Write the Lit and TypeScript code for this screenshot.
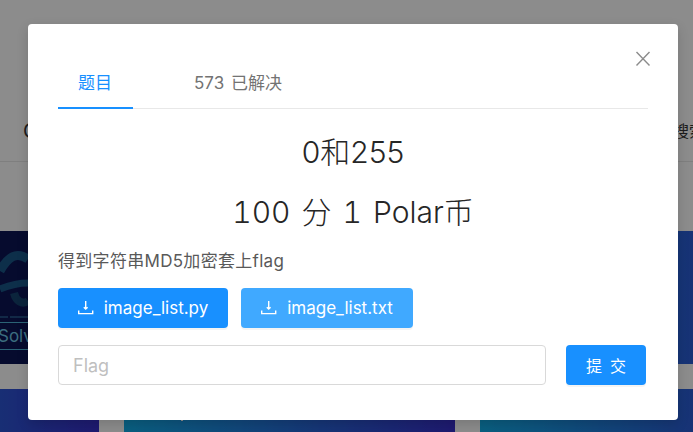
import { LitElement, html, css } from "lit";
import { customElement } from "lit/decorators.js";

const downloadIcon = html`<svg class="dl" viewBox="0 0 16 16" fill="none" stroke="currentColor" stroke-width="1.4">
  <path d="M7.7 1v8M5.8 7.2l1.9 1.9 1.9-1.9M.7 10.4v3.2h14v-3.2" />
</svg>`;

@customElement("app-root")
export class AppRoot extends LitElement {
  static styles = css`
    :host {
      display: block;
      position: relative;
      height: 432px;
      overflow: hidden;
      font-family: Inter, "Noto Sans CJK SC", sans-serif;
      background: #fff;
    }

    /* page behind the dialog */
    .top {
      height: 162px;
      box-sizing: border-box;
      border-bottom: 1px solid #e8e8e8;
      padding: 119px 0 0 23px;
      display: flex;
      justify-content: space-between;
      font-size: 16px;
      line-height: 24px;
      color: #333;
      white-space: nowrap;
    }
    .logo {
      font-size: 20px;
    }
    .search {
      margin-right: -12px;
    }
    .cards {
      margin: 69px 0 0 -232px;
      display: grid;
      grid-template-columns: repeat(3, 331px);
      grid-auto-rows: 133px;
      gap: 25px;
    }
    .card {
      position: relative;
      overflow: hidden;
      background: linear-gradient(90deg, #12ade8, #382fcc);
    }
    .card.dark {
      background: #0b1554;
    }
    .art {
      position: absolute;
      left: 232px;
      top: 0;
      width: 40px;
      height: 133px;
      opacity: 0.7;
    }
    .solved {
      position: absolute;
      left: 230px;
      top: 91px;
      width: 60px;
      box-sizing: border-box;
      border-top: 1px solid #4fb4d8;
      border-bottom: 1px solid #4fb4d8;
      color: #6cc6e6;
      font-size: 17px;
      line-height: 26px;
    }
    .tick {
      position: absolute;
      left: 57px;
      top: 30px;
      width: 2px;
      height: 2px;
      background: #fff;
    }

    .mask {
      position: absolute;
      inset: 0;
      background: rgba(0, 0, 0, 0.45);
    }
    .modal {
      position: absolute;
      left: 28px;
      top: 24px;
      width: 650px;
      height: 396px;
      box-sizing: border-box;
      padding: 41px 30px 0;
      background: #fff;
      border-radius: 4px;
      box-shadow: 0 4px 12px rgba(0, 0, 0, 0.15);
      color: #595959;
    }
    .close {
      position: absolute;
      right: 27px;
      top: 27px;
      width: 16px;
      height: 16px;
      color: #8c8c8c;
    }
    .tabs {
      display: flex;
      height: 44px;
      box-sizing: border-box;
      border-bottom: 1px solid #e8e8e8;
      font-size: 17px;
      line-height: 36px;
    }
    .tab {
      padding: 0 21px;
      height: 44px;
      box-sizing: border-box;
      white-space: nowrap;
    }
    .tab.active {
      width: 75px;
      padding: 0 0 0 20px;
      color: #1890ff;
      border-bottom: 2px solid #1890ff;
    }
    .tab + .tab {
      margin-left: 40px;
      padding-left: 21px;
      word-spacing: 2px;
      color: #737373;
    }
    h3 {
      margin: 0;
      font-weight: 300;
      font-size: 30px;
      line-height: 40px;
      text-align: center;
      color: #262626;
    }
    .name {
      margin-top: 23px;
    }
    .score {
      margin-top: 20px;
      font-variant-numeric: tabular-nums;
      word-spacing: 3px;
    }
    .desc {
      margin-top: 17px;
      font-size: 17px;
      line-height: 24px;
      letter-spacing: 0.3px;
      color: #595959;
    }
    .files {
      margin-top: 15px;
      display: flex;
      gap: 13px;
    }
    .btn {
      height: 40px;
      box-sizing: border-box;
      border-radius: 4px;
      background: #1890ff;
      color: #fff;
      font-size: 17px;
      display: flex;
      align-items: center;
      justify-content: center;
      box-shadow: 0 2px 0 rgba(0, 0, 0, 0.045);
    }
    .btn.file {
      width: 170px;
      gap: 10px;
    }
    .btn.file.light {
      width: 172px;
      background: #40a9ff;
    }
    .dl {
      width: 16px;
      height: 16px;
    }
    .submit-row {
      margin-top: 17px;
      display: flex;
      gap: 20px;
    }
    .flag {
      width: 488px;
      height: 40px;
      box-sizing: border-box;
      border: 1px solid #d9d9d9;
      border-radius: 4px;
      padding: 0 14px;
      font: inherit;
      font-size: 18px;
      outline: none;
    }
    .flag::placeholder {
      color: #bfbfbf;
    }
    .btn.submit {
      width: 80px;
      font-size: 16px;
      padding-left: 8px;
      letter-spacing: 8px;
    }
  `;

  render() {
    return html`
      <div class="top"><span class="logo">C</span><span class="search">搜索</span></div>
      <div class="cards">
        <div class="card dark">
          <svg class="art" viewBox="0 0 40 133" fill="none">
            <path d="M0 40C8 26 16 20 28 28" stroke="#20729f" stroke-width="9" />
            <path d="M0 58C10 54 20 52 28 52" stroke="#20729f" stroke-width="7" />
            <path d="M14 62C16 70 22 74 28 70" stroke="#1a5578" stroke-width="8" />
            <path d="M0 86H8M10 86H28" stroke="#4fb4d8" stroke-width="1" />
          </svg>
          <div class="solved">Solved</div>
        </div>
        <div class="card"></div>
        <div class="card"></div>
        <div class="card"></div>
        <div class="card"><span class="tick"></span></div>
        <div class="card"></div>
      </div>
      <div class="mask"></div>
      <div class="modal">
        <svg class="close" viewBox="0 0 16 16" stroke="currentColor" stroke-width="1.4" fill="none">
          <path d="M1.5 1l13 13.5M14.5 1l-13 13.5" />
        </svg>
        <div class="tabs">
          <div class="tab active">题目</div>
          <div class="tab">573 已解决</div>
        </div>
        <h3 class="name">0和255</h3>
        <h3 class="score">100 分 1 Polar币</h3>
        <div class="desc">得到字符串MD5加密套上flag</div>
        <div class="files">
          <div class="btn file">${downloadIcon}<span>image_list.py</span></div>
          <div class="btn file light">${downloadIcon}<span>image_list.txt</span></div>
        </div>
        <div class="submit-row">
          <input class="flag" placeholder="Flag" />
          <div class="btn submit">提交</div>
        </div>
      </div>
    `;
  }
}
